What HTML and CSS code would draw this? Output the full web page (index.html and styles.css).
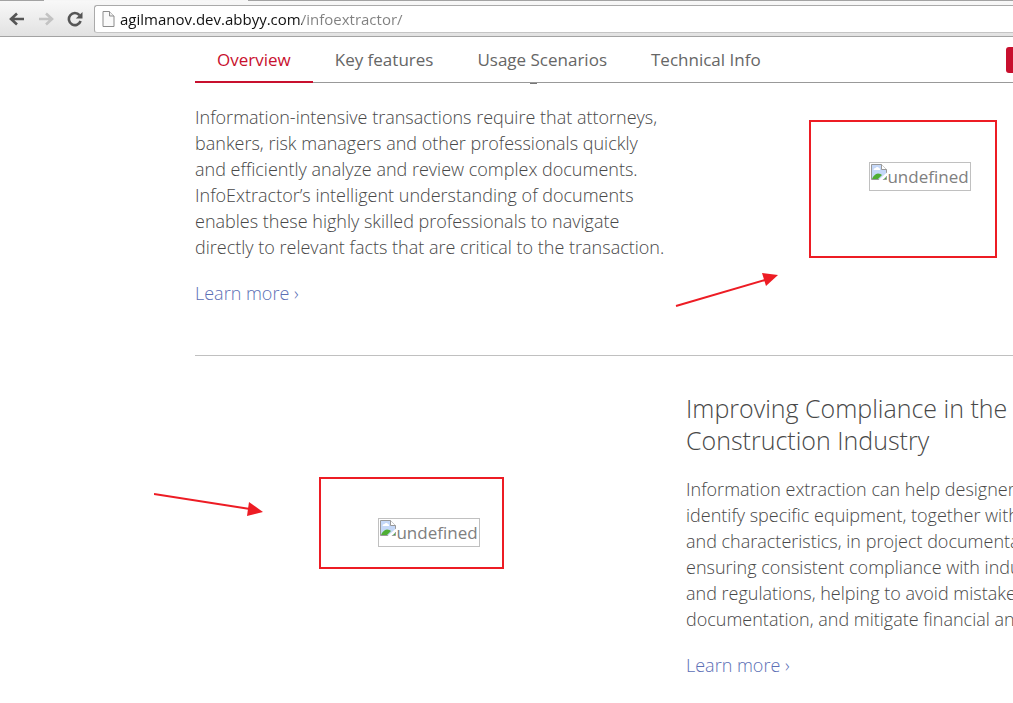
FILE: index.html
```
<!DOCTYPE html>
<html lang="en">
<head>
<meta charset="utf-8">
<title>InfoExtractor</title>
<link rel="stylesheet" href="styles.css">
</head>
<body>
<header class="toolbar">
  <span class="tab-edge"></span>
  <button class="tool" type="button" aria-label="Back">
    <svg width="18" height="16" viewBox="0 0 18 16"><path d="M16 8H3M9 2.500L3 8l6 5.500" fill="none" stroke="#555" stroke-width="2.600"/></svg>
  </button>
  <button class="tool" type="button" aria-label="Forward" disabled>
    <svg width="18" height="16" viewBox="0 0 18 16"><path d="M2 8h13M9 2.500L15 8l-6 5.500" fill="none" stroke="#c3c3c3" stroke-width="2.600"/></svg>
  </button>
  <button class="tool" type="button" aria-label="Reload">
    <svg width="18" height="16" viewBox="0 0 18 16"><path d="M13.500 4.200A6 6 0 1 0 14.600 10" fill="none" stroke="#555" stroke-width="2.600"/><path d="M16.500 1v6.600H9.800z" fill="#555"/></svg>
  </button>
  <label class="address">
    <svg width="13" height="16" viewBox="0 0 13 16"><path d="M1 .5h6.500L12 5v10.500H1z" fill="#fafafa" stroke="#8c8c8c"/><path d="M7.500.5V5H12" fill="#eee" stroke="#8c8c8c"/></svg>
    <input class="url" type="text" aria-label="Address" value="agilmanov.dev.abbyy.com/infoextractor/">
  </label>
</header>

<nav class="nav">
  <div class="tabs">
    <a class="tab tab-active" href="#overview">Overview</a>
    <a class="tab" href="#features">Key features</a>
    <a class="tab" href="#scenarios">Usage Scenarios</a>
    <a class="tab" href="#technical">Technical Info</a>
    <button class="action" type="button" aria-label="Contact"></button>
  </div>
  <span class="descender"></span>
</nav>

<main class="content" id="overview">
  <section class="row row-first">
    <div class="copy">
      <p class="text">Information-intensive transactions require that attorneys,<br>bankers, risk managers and other professionals quickly<br>and efficiently analyze and review complex documents.<br>InfoExtractor’s intelligent understanding of documents<br>enables these highly skilled professionals to navigate<br>directly to relevant facts that are critical to the transaction.</p>
      <a class="more" href="#more">Learn more ›</a>
    </div>
    <div class="media">
      <div class="missing">
        <svg class="missing-icon" width="16" height="16" viewBox="0 0 16 16"><path d="M.5.5h10l5 5v10H.5z" fill="#c5d8f8" stroke="#999"/><path d="M2.500 6a2 2 0 0 1 2-2 2 2 0 0 1 3.500 0 1.500 1.500 0 0 1 1 2z" fill="#fff"/><path d="M1 15q2-5 6-5.500 3 0 4 1.500L7 15zM13 15l2-2v2z" fill="#4fae34"/><path d="M10.500.5v5h5" fill="#fff" stroke="#999"/><path d="M7.500 16L16 8.500v3L11.500 16z" fill="#fff"/></svg><span>undefined</span>
        <span class="mark mark-tall"></span>
        <svg class="arrow arrow-up" width="104" height="36" viewBox="0 0 104 36"><path d="M1 33L90 7" stroke="#ed1c24" stroke-width="2"/><path d="M103 2L87 0l4 13z" fill="#ed1c24"/></svg>
      </div>
    </div>
  </section>

  <section class="row row-second">
    <div class="media">
      <div class="missing">
        <svg class="missing-icon" width="16" height="16" viewBox="0 0 16 16"><path d="M.5.5h10l5 5v10H.5z" fill="#c5d8f8" stroke="#999"/><path d="M2.500 6a2 2 0 0 1 2-2 2 2 0 0 1 3.500 0 1.500 1.500 0 0 1 1 2z" fill="#fff"/><path d="M1 15q2-5 6-5.500 3 0 4 1.500L7 15zM13 15l2-2v2z" fill="#4fae34"/><path d="M10.500.5v5h5" fill="#fff" stroke="#999"/><path d="M7.500 16L16 8.500v3L11.500 16z" fill="#fff"/></svg><span>undefined</span>
        <span class="mark mark-short"></span>
        <svg class="arrow arrow-down" width="110" height="28" viewBox="0 0 110 28"><path d="M0 4L96 19" stroke="#ed1c24" stroke-width="2"/><path d="M109 22L95 12l-2 14z" fill="#ed1c24"/></svg>
      </div>
    </div>
    <div class="copy">
      <h2 class="title">Improving Compliance in the<br>Construction Industry</h2>
      <p class="text">Information extraction can help designers<br>identify specific equipment, together with<br>and characteristics, in project documentation,<br>ensuring consistent compliance with industry<br>and regulations, helping to avoid mistakes<br>documentation, and mitigate financial and</p>
      <a class="more" href="#more">Learn more ›</a>
    </div>
  </section>
</main>
</body>
</html>
```
FILE: styles.css
```
* { box-sizing: border-box; }

body {
  margin: 0;
  overflow: hidden;
  background: #fff;
  color: #484848;
  font: 300 18px/26px "Open Sans", sans-serif;
}

a { text-decoration: none; }
svg { display: block; flex: none; }

.toolbar {
  position: relative;
  display: flex;
  align-items: center;
  height: 37px;
  padding-left: 8px;
  border-top: 1px solid #a3a3a3;
  border-bottom: 1px solid #a3a3a3;
  background: linear-gradient(#f8f8f8, #e2e2e2);
}

.tab-edge {
  position: absolute;
  top: -1px;
  left: 44px;
  width: 204px;
  height: 1px;
  background: #f6f6f6;
}

.tool {
  width: 29px;
  padding: 0;
  border: 0;
  background: none;
}

.address {
  display: flex;
  flex: 1;
  align-items: center;
  gap: 5px;
  height: 28px;
  margin: 1px 0 0 -1px;
  padding-left: 7px;
  border: 1px solid #aaa;
  border-right: 0;
  border-bottom-color: #c4c4c4;
  border-radius: 3px 0 0 3px;
  background: #fff;
}

.url {
  flex: 1;
  min-width: 0;
  padding: 0;
  border: 0;
  outline: 0;
  background: linear-gradient(90deg, #111 182px, #808080 182px);
  background-clip: text;
  -webkit-background-clip: text;
  color: transparent;
  font: 400 15px/24px "Open Sans", sans-serif;
}

.nav {
  position: relative;
  padding-left: 195px;
}

.tabs {
  display: flex;
  align-items: flex-start;
  height: 46px;
  border-bottom: 1px solid #999;
}

.tab {
  flex: none;
  height: 46px;
  padding: 10px 22px 0;
  color: #666;
  font-size: 17px;
  font-weight: 400;
}

.tab-active {
  border-bottom: 2px solid #c8102e;
  color: #c8102e;
}

.action {
  width: 7px;
  height: 26px;
  margin: 10px 0 0 auto;
  padding: 0;
  border: 0;
  border-radius: 3px 0 0 3px;
  background: #c8102e;
}

.descender {
  position: absolute;
  top: 46px;
  left: 530px;
  width: 7px;
  height: 1px;
  background: #777;
}

.content { padding-left: 195px; }

.row {
  display: grid;
  grid-template-columns: 468px 468px;
  column-gap: 23px;
}

.row-first {
  padding: 21px 0 49px;
  border-bottom: 1px solid #c0c0c0;
}

.row-second { padding-top: 36px; }

.copy { white-space: nowrap; }

.title {
  margin: 0 0 20px;
  font-size: 25px;
  font-weight: 300;
  line-height: 32px;
}

.text { margin: 0 0 20px; }

.more {
  display: block;
  color: #5c6fb5;
}

.media {
  display: flex;
  justify-content: center;
  align-items: flex-start;
}

.row-first .media { padding-top: 58px; }
.row-second .media { padding-top: 126px; }

.missing {
  position: relative;
  display: flex;
  height: 29px;
  padding: 1px;
  border: 1px solid silver;
  color: #808080;
  font-size: 17px;
  font-weight: 400;
}

.mark {
  position: absolute;
  border: 2px solid #ed1c24;
}

.mark-tall {
  top: -43px;
  left: -61px;
  width: 188px;
  height: 138px;
}

.mark-short {
  top: -42px;
  left: -60px;
  width: 185px;
  height: 92px;
}

.arrow { position: absolute; }

.arrow-up {
  top: 110px;
  left: -195px;
}

.arrow-down {
  top: -29px;
  left: -225px;
}
```
